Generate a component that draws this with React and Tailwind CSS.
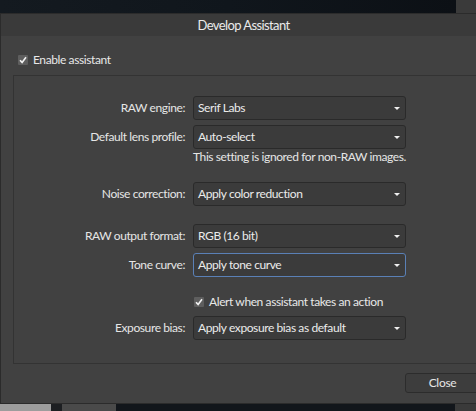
import React from "react";

const font = { fontFamily: "Lato, 'Noto Sans', sans-serif" };

function Check() {
  return (
    <span className="w-[10px] h-[10px] bg-[#5e5e5e] rounded-[1px] flex items-center justify-center">
      <svg width="8" height="8" viewBox="0 0 8 8">
        <path d="M1 4.2 L3.1 6.4 L7 1.2" fill="none" stroke="#f2f2f2" strokeWidth="1.6" />
      </svg>
    </span>
  );
}

function Dropdown({ value, focused }) {
  return (
    <div
      className={
        "w-[213px] h-[24px] rounded-[3px] bg-[#3b3b3b] flex items-center justify-between pl-[4px] pr-[5px] border " +
        (focused ? "border-[#5a80b6]" : "border-[#2a2a2a]")
      }
    >
      <span className="text-[12px] tracking-[-0.4px] text-[#ebebeb] whitespace-nowrap">{value}</span>
      <svg width="6" height="3" viewBox="0 0 6 3">
        <path d="M0 0 H6 L3 3 Z" fill="#f0f0f0" />
      </svg>
    </div>
  );
}

function Row({ label, value, focused, className = "" }) {
  return (
    <div className={"flex items-center h-[24px] " + className}>
      <div className="w-[179px] text-right text-[12px] tracking-[-0.4px] text-[#e6e6e6] whitespace-nowrap pr-[8px]">{label}</div>
      <Dropdown value={value} focused={focused} />
    </div>
  );
}

export default function App() {
  return (
    <div className="w-[476px] h-[411px] overflow-hidden flex flex-col bg-[#0e1318]" style={font}>
      {/* backdrop top */}
      <div className="h-[13px] flex shrink-0">
        <div className="flex-1 bg-gradient-to-r from-[#141a20] via-[#10161c] to-[#0c1015]" />
        <div className="w-[20px] bg-[#3a3a3a]" />
      </div>

      {/* dialog */}
      <div className="h-[391px] shrink-0 w-[500px] bg-[#414141] border-t border-b border-l border-[#2b2b2b] flex flex-col">
        <div className="h-[22px] bg-[#3a3a3a] flex items-center justify-center pr-[14px] pt-[2px]">
          <span className="text-[13px] tracking-[-0.6px] text-[#eaeaea]">Develop Assistant</span>
        </div>

        <div className="h-[17px]" />
        <label className="flex items-center gap-[5px] pl-[17px] h-[14px]">
          <Check />
          <span className="text-[12px] tracking-[-0.4px] text-[#e8e8e8]">Enable assistant</span>
        </label>

        <div className="mt-[8px] ml-[12px] w-[480px] h-[289px] border border-[#333333] bg-[#414141] pt-[20px]">
          <Row label="RAW engine:" value="Serif Labs" />
          <Row label="Default lens profile:" value="Auto-select" className="mt-[5px]" />
          <div className="pl-[179px] h-[16px] flex items-center text-[12px] tracking-[-0.4px] text-[#e6e6e6] whitespace-nowrap">
            This setting is ignored for non-RAW images.
          </div>
          <Row label="Noise correction:" value="Apply color reduction" className="mt-[17px]" />
          <Row label="RAW output format:" value="RGB (16 bit)" className="mt-[18px]" />
          <Row label="Tone curve:" value="Apply tone curve" focused className="mt-[5px]" />
          <label className="mt-[17px] h-[16px] pl-[180px] flex items-center gap-[5px]">
            <Check />
            <span className="text-[12px] tracking-[-0.4px] text-[#e8e8e8] whitespace-nowrap">Alert when assistant takes an action</span>
          </label>
          <Row label="Exposure bias:" value="Apply exposure bias as default" className="mt-[6px]" />
        </div>

        <div className="mt-[9px] pl-[404px]">
          <button className="w-[75px] h-[20px] rounded-[3px] border border-[#2c2c2c] bg-[#3d3d3d] text-[12px] tracking-[-0.3px] text-[#e6e6e6] flex items-center justify-center">
            Close
          </button>
        </div>
      </div>

      {/* backdrop bottom */}
      <div className="flex-1 flex">
        <div className="w-[51px] bg-[#9d9d9d]" />
        <div className="w-[11px] bg-[#1d1f22]" />
        <div className="w-[54px] bg-[#4a4a4a]" />
        <div className="flex-1 bg-[#12161b]" />
        <div className="w-[21px] bg-[#3a3a3a]" />
      </div>
    </div>
  );
}
